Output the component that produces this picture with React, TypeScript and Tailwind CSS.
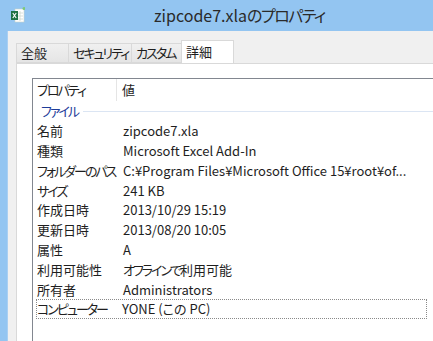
import React from "react";

const rows: { label: string; value: string }[] = [
  { label: "名前", value: "zipcode7.xla" },
  { label: "種類", value: "Microsoft Excel Add-In" },
  { label: "フォルダーのパス", value: "C:¥Program Files¥Microsoft Office 15¥root¥of..." },
  { label: "サイズ", value: "241 KB" },
  { label: "作成日時", value: "2013/10/29 15:19" },
  { label: "更新日時", value: "2013/08/20 10:05" },
  { label: "属性", value: "A" },
  { label: "利用可能性", value: "オフラインで利用可能" },
  { label: "所有者", value: "Administrators" },
];

// kana in Meiryo UI are narrow, so tighten kana runs only
const Jp = ({ text, t = "tracking-[-2px]" }: { text: string; t?: string }) => (
  <>
    {text.split(/([\u3040-\u30ff]+)/).map((part, i) =>
      /[\u3040-\u30ff]/.test(part) ? (
        <span key={i} className={t}>
          {part}
        </span>
      ) : (
        <React.Fragment key={i}>{part}</React.Fragment>
      )
    )}
  </>
);

const ExcelIcon = () => (
  <svg width="16" height="16" viewBox="0 0 16 16">
    <rect x="6" y="2" width="9" height="13" fill="#ffffff" stroke="#c8d4c8" strokeWidth="0.6" />
    <line x1="8" y1="6" x2="14" y2="6" stroke="#cfd8cf" strokeWidth="0.8" />
    <line x1="8" y1="9" x2="14" y2="9" stroke="#cfd8cf" strokeWidth="0.8" />
    <line x1="8" y1="12" x2="14" y2="12" stroke="#cfd8cf" strokeWidth="0.8" />
    <line x1="11" y1="4" x2="11" y2="14" stroke="#cfd8cf" strokeWidth="0.8" />
    <rect x="2" y="4" width="7" height="9" fill="#1e7145" />
    <path d="M3.8 6 L7.2 11 M7.2 6 L3.8 11" stroke="#ffffff" strokeWidth="1.1" />
    <circle cx="15" cy="1.5" r="1.5" fill="#7dc87a" />
  </svg>
);

const Tab = ({ label, w, active }: { label: string; w: string; active?: boolean }) =>
  active ? (
    <div className={`${w} h-[23px] -mb-px relative z-10 bg-white border border-b-0 border-[#d9d9d9] pl-[4px] pt-[2px] text-[13px] leading-[18px] text-[#1e1e1e] whitespace-nowrap`}>
      <Jp text={label} />
    </div>
  ) : (
    <div className={`${w} h-[20px] mt-[3px] bg-gradient-to-b from-[#f0f0f0] to-[#e5e5e5] border border-r-0 border-[#d9d9d9] pl-[4px] text-[13px] leading-[18px] text-[#1e1e1e] whitespace-nowrap`}>
      <Jp text={label} />
    </div>
  );

export default function App() {
  return (
    <div className="w-[433px] h-[341px] overflow-hidden bg-[#93c5f1] font-['Noto_Sans_CJK_JP',sans-serif] [font-feature-settings:'palt']">
      {/* title bar */}
      <div className="relative h-[31px] flex items-center">
        <div className="absolute left-[9px] top-[7px]">
          <ExcelIcon />
        </div>
        <div className="pl-[154px] text-[16px] leading-[22px] text-[#2a2a2a] -mt-[1px] whitespace-nowrap">
          zipcode7.xla<Jp text="のプロパティ" t="tracking-[-1.5px]" />
        </div>
      </div>

      <div className="flex h-[310px]">
        <div className="w-[7px] shrink-0" />
        <div className="w-px shrink-0 bg-[#a9cff2]" />
        <div className="flex-1 bg-[#f0f0f0] pt-[9px] pl-[8px] min-w-[600px]">
          {/* tabs */}
          <div className="flex items-start">
            <Tab label="全般" w="w-[52px]" />
            <Tab label="セキュリティ" w="w-[63px]" />
            <Tab label="カスタム" w="w-[51px] border-r" />
            <Tab label="詳細" w="w-[53px] -ml-px" active />
          </div>

          {/* tab page */}
          <div className="h-[300px] bg-white border border-[#d9d9d9] pl-[15px] pt-[14px]">
            <div className="h-[280px] border border-[#828790] text-[13px] text-[#1e1e1e]">
              {/* header */}
              <div className="flex h-[22px] items-center bg-white">
                <div className="w-[84px] h-full pl-[4px] leading-[22px] border-r border-[#e5e5e5] whitespace-nowrap">
                  <Jp text="プロパティ" />
                </div>
                <div className="pl-[5px] leading-[22px]">値</div>
              </div>
              {/* group */}
              <div className="flex items-center h-[20px] pl-[8px]">
                <span className="text-[#1e3c9a] leading-[20px] whitespace-nowrap">
                  <Jp text="ファイル" />
                </span>
                <div className="flex-1 h-px bg-[#dbe5f3] ml-[5px] mr-[2px]" />
              </div>
              {rows.map((r) => (
                <div key={r.label} className="flex h-[19.8px] items-center">
                  <div className="w-[85px] shrink-0 pl-[4px] whitespace-nowrap">
                    <Jp text={r.label} />
                  </div>
                  <div className="pl-[5px] whitespace-nowrap">
                    <Jp text={r.value} />
                  </div>
                </div>
              ))}
              <div className="flex h-[20px] w-[391px] ml-[3px] items-center border border-dotted border-[#8a8a8a]">
                <div className="w-[85px] shrink-0 whitespace-nowrap">
                  <Jp text="コンピューター" />
                </div>
                <div className="whitespace-nowrap">YONE (この PC)</div>
              </div>
            </div>
          </div>
        </div>
      </div>
    </div>
  );
}
